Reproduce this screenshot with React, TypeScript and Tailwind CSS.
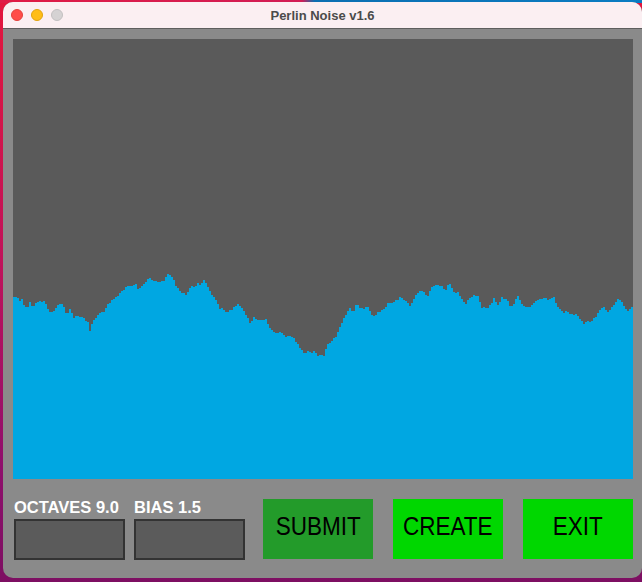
import React from "react";

const PTS: [number, number][] = [
  [13,297],[17,298],[19,300],[21,299],[24,307],[26,308],[29,302],[32,307],[37,301],[43,302],[49,311],[53,312],[57,304],[62,305],[66,314],[69,309],[73,317],[82,317],[87,322],[89,330],[92,322],[97,314],[103,311],[107,305],[115,297],[123,290],[127,285],[131,287],[135,285],[138,290],[141,287],[149,277],[152,281],[154,280],[158,282],[162,282],[167,274],[169,275],[173,280],[177,289],[179,291],[183,293],[185,296],[187,292],[190,285],[192,287],[197,284],[199,284],[203,280],[207,287],[210,293],[215,300],[218,307],[225,312],[230,310],[237,304],[242,310],[247,317],[249,322],[253,317],[258,321],[265,319],[270,330],[277,333],[282,333],[283,336],[292,337],[297,345],[302,353],[307,351],[310,353],[313,350],[317,356],[319,355],[322,357],[327,345],[332,340],[335,338],[338,331],[343,317],[349,309],[352,312],[355,305],[360,308],[367,308],[373,317],[378,311],[382,311],[387,303],[392,303],[399,298],[405,301],[409,306],[414,297],[418,292],[420,290],[425,294],[427,295],[432,285],[435,286],[440,286],[445,289],[449,284],[453,293],[457,292],[462,300],[465,303],[468,298],[473,295],[477,296],[481,308],[485,307],[488,308],[493,299],[497,304],[501,297],[506,300],[509,307],[513,303],[517,296],[522,305],[527,308],[533,302],[539,300],[545,298],[548,301],[553,297],[557,308],[562,313],[566,311],[570,315],[575,314],[578,317],[583,325],[586,320],[590,322],[594,318],[598,310],[603,308],[608,312],[612,305],[617,299],[620,300],[624,308],[628,311],[631,308],[633,308]
];

function buildPath(): string {
  const W = 620;
  const H = 440;
  let seed = 12345;
  const rnd = () => {
    seed = (seed * 1103515245 + 12345) & 0x7fffffff;
    return seed / 0x7fffffff;
  };
  const interp = (x: number) => {
    const sx = x + 13;
    for (let i = 0; i < PTS.length - 1; i++) {
      const [x0, y0] = PTS[i];
      const [x1, y1] = PTS[i + 1];
      if (sx >= x0 && sx <= x1) {
        const t = x1 === x0 ? 0 : (sx - x0) / (x1 - x0);
        return y0 + (y1 - y0) * t - 39;
      }
    }
    return PTS[PTS.length - 1][1] - 39;
  };
  let d = `M0 ${H}`;
  let first = true;
  for (let x = 0; x < W; x += 2) {
    const y = Math.round(interp(x) + (rnd() - 0.5) * 2.4);
    if (first) {
      d += ` L0 ${y}`;
      first = false;
    } else {
      d += ` V${y}`;
    }
    d += ` H${Math.min(x + 2, W)}`;
  }
  d += ` V${H} Z`;
  return d;
}

const WAVE = buildPath();

export default function App() {
  return (
    <div className="w-[642px] h-[582px] overflow-hidden pt-[2px] pl-[3px] [background:linear-gradient(to_right,#df1a45_0%,#d21d55_47%,#0b6fb2_49%,#0a7cc2_100%)_top/100%_3px_no-repeat,linear-gradient(to_bottom,#e3163c_0%,#c0125a_45%,#8f0f6c_80%,#7d0f62_100%)]">
      <div className="w-[639px] h-[576px] rounded-[10px] overflow-hidden flex flex-col bg-[#8a8a8a] font-['Liberation_Sans',Arial,sans-serif]">
        {/* Title bar */}
        <div className="h-[27px] shrink-0 bg-[#fbeff2] border-b border-[#5e5e5e] relative flex items-center justify-center">
          <div className="absolute left-[8px] top-[7px] flex gap-[8px]">
            <div className="w-[12px] h-[12px] rounded-full bg-[#ff4d4a] border border-[#e2413c]" />
            <div className="w-[12px] h-[12px] rounded-full bg-[#ffbd16] border border-[#e0a20e]" />
            <div className="w-[12px] h-[12px] rounded-full bg-[#d5d2d3] border border-[#c2bfc0]" />
          </div>
          <span className="text-[13px] font-bold text-[#4b4b4b] leading-none pt-[1px]">Perlin Noise v1.6</span>
        </div>

        {/* Body */}
        <div className="flex flex-col pl-[10px] pt-[10px]">
          <div className="w-[620px] h-[440px] bg-[#5a5a5a]">
            <svg width="620" height="440" viewBox="0 0 620 440" className="block">
              <path d={WAVE} fill="#00a7e2" shapeRendering="crispEdges" />
            </svg>
          </div>

          <div className="flex items-start mt-[20px]">
            <div className="flex flex-col ml-[1px] w-[111px]">
              <div className="h-[16px] leading-[16px] text-[16.5px] font-bold text-white whitespace-nowrap">OCTAVES 9.0</div>
              <div className="mt-[4px] h-[41px] bg-[#5b5b5b] border-2 border-[#333333]" />
            </div>
            <div className="flex flex-col ml-[9px] w-[111px]">
              <div className="h-[16px] leading-[16px] text-[16.5px] font-bold text-white whitespace-nowrap">BIAS 1.5</div>
              <div className="mt-[4px] h-[41px] bg-[#5b5b5b] border-2 border-[#333333]" />
            </div>
            <div className="ml-[18px] w-[110px] h-[60px] bg-[#239b2a] flex items-center justify-center pb-[5px]">
              <span className="text-[25px] text-black scale-x-90 inline-block">SUBMIT</span>
            </div>
            <div className="ml-[20px] w-[110px] h-[60px] bg-[#00d700] flex items-center justify-center pb-[5px]">
              <span className="text-[25px] text-black scale-x-90 inline-block">CREATE</span>
            </div>
            <div className="ml-[20px] w-[110px] h-[60px] bg-[#00d700] flex items-center justify-center pb-[5px]">
              <span className="text-[25px] text-black scale-x-90 inline-block">EXIT</span>
            </div>
          </div>
        </div>
      </div>
    </div>
  );
}
